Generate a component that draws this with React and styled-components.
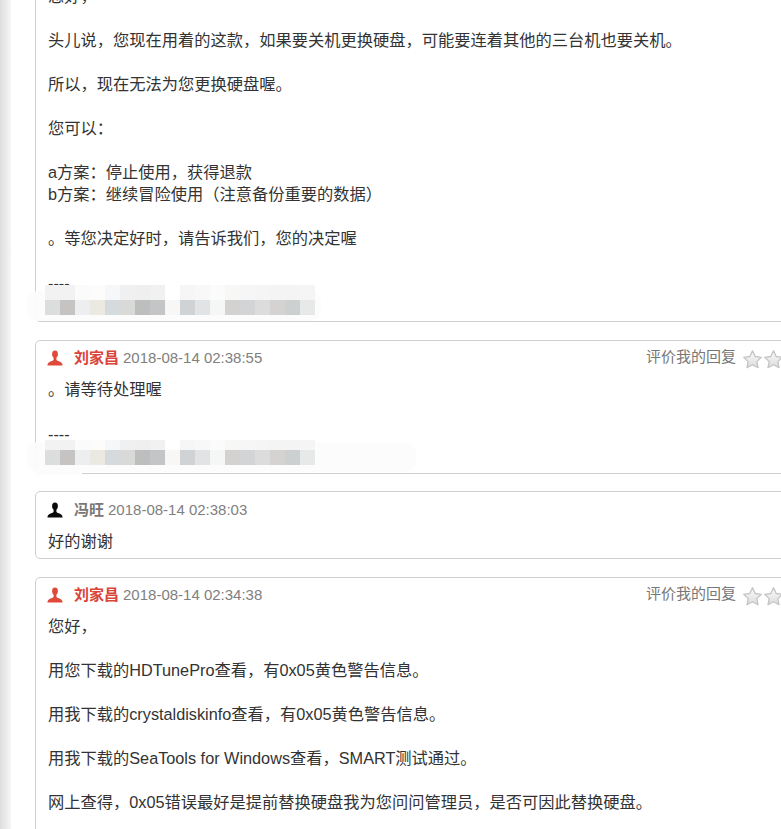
import React from "react";
import styled, { createGlobalStyle } from "styled-components";

const Global = createGlobalStyle`
  html, body { margin: 0; padding: 0; background: #fff; }
  body { font-family: "Liberation Sans", "Noto Sans CJK SC", sans-serif; color: #333; }
`;

const Page = styled.div`
  width: 781px;
  height: 829px;
  overflow: hidden;
  display: flex;
  background: #fff;
`;

const Edge = styled.div`
  flex: 0 0 11px;
  background: linear-gradient(to right, #dedede, #f6f6f6);
`;

const Thread = styled.div`
  flex: 0 0 825px;
  margin-left: 24px;
  margin-top: -15.4px;
  display: flex;
  flex-direction: column;
  gap: 17.6px;
`;

const Card = styled.article`
  border: 1px solid #cfcfcf;
  border-radius: 5px;
  padding: 6.6px 12px 5.4px;
  ${(p) => (p.$clipped ? "padding-top: 0;" : "")}
`;

const Header = styled.header`
  display: flex;
  align-items: center;
  height: 22px;
  margin: 0 0 10px -1px;
  font-size: 15px;
  line-height: 22px;
`;

const Avatar = styled.svg`
  width: 16px;
  height: 16px;
  margin-right: 11px;
  flex: none;
  color: ${(p) => p.$color};
`;

const Name = styled.strong`
  color: ${(p) => p.$color};
  font-weight: 700;
  margin-right: 4px;
`;

const Time = styled.span`
  color: #808080;
`;

const Rating = styled.div`
  margin-left: auto;
  display: flex;
  align-items: center;
  color: #777;
  margin-top: -2px;
`;

const RatingLabel = styled.span`
  margin-right: 6px;
`;

const StarIcon = styled.svg`
  width: 21px;
  height: 21px;
  flex: none;
  margin-top: 5px;
`;

const Body = styled.div`
  font-size: 16.25px;
  line-height: 22px;
  white-space: pre-line;
  margin: -1px 0 1px;
`;

const Dashes = styled.div`
  font-size: 16.25px;
  line-height: 22px;
`;

const Signature = styled.div`
  position: relative;
  height: 22px;
`;

const Haze = styled.div`
  position: absolute;
  left: -22px;
  top: ${(p) => p.$top}px;
  width: ${(p) => p.$width}px;
  height: 30px;
  background: rgba(252, 252, 252, 0.92);
  border-radius: 12px;
`;

const Smudge = styled.div`
  position: absolute;
  left: -13px;
  top: 25px;
  width: 47px;
  height: 5px;
  background: #fcfcfc;
`;

const Mosaic = styled.div`
  position: absolute;
  left: -3px;
  top: ${(p) => p.$top}px;
  display: grid;
  grid-template-columns: repeat(18, 15px);
  grid-template-rows: ${(p) => p.$rows};
`;

const Cell = styled.span`
  background: ${(p) => p.$c};
`;

const topRow = ["#f2f2f2","#f2f2f2","#fbfbfb","#fdfcfa","#f6f7f8","#f0f0f0","#efefef","#f1f1f1","#fff","#f6f6f6","#f8f8f8","#fbfbfb","#f7f7f6","#f6f6f6","#f5f5f5","#f4f4f4","#f4f4f4","#f5f5f5"];
const bottomRow = ["#dcdddd","#c5c4c2","#eceeef","#ece9e3","#d5dbdd","#d9d9d7","#bdbfbf","#c3c5c6","#f8f7f5","#d0d3d6","#e2e3e4","#f5f6f6","#d3d2d1","#d2d4d5","#dcdcdc","#d5d3d1","#ccd0d1","#e7e8e8"];

function Person({ color }) {
  return (
    <Avatar $color={color} viewBox="0 0 16 16" aria-hidden="true">
      <path
        fill="currentColor"
        d="M8 0.5C6 0.5 5.1 2 5.1 4c0 1.6.6 3 1.5 3.8v1.6c0 .7-.9 1.2-2.6 1.9C2 12.1.6 13 .4 15.5h15.2c-.2-2.5-1.6-3.4-3.6-4.2-1.7-.7-2.6-1.2-2.6-1.9V7.8c.9-.8 1.5-2.2 1.5-3.8 0-2-.9-3.5-2.9-3.5z"
      />
    </Avatar>
  );
}

function Star({ id }) {
  return (
    <StarIcon viewBox="0 0 21 21" aria-hidden="true">
      <defs>
        <linearGradient id={id} x1="0" y1="0" x2="0" y2="1">
          <stop offset="0" stopColor="#fbfbfb" />
          <stop offset="1" stopColor="#dcdcdc" />
        </linearGradient>
      </defs>
      <path
        d="M10.5 1.8l2.7 5.7 6.1.8-4.5 4.3 1.2 6.1-5.5-3-5.5 3 1.2-6.1L1.7 8.3l6.1-.8z"
        fill={`url(#${id})`}
        stroke="#c4c4c4"
        strokeWidth="1.3"
        strokeLinejoin="round"
      />
    </StarIcon>
  );
}

function Blurred({ hazeTop, hazeWidth, top, rows, smudge }) {
  return (
    <Signature>
      <Haze $top={hazeTop} $width={hazeWidth} />
      {smudge && <Smudge />}
      <Mosaic $top={top} $rows={rows}>
        {topRow.map((c, i) => <Cell key={`t${i}`} $c={c} />)}
        {bottomRow.map((c, i) => <Cell key={`b${i}`} $c={c} />)}
      </Mosaic>
    </Signature>
  );
}

function CardHeader({ name, time, nameColor, iconColor, rate, id }) {
  return (
    <Header>
      <Person color={iconColor} />
      <Name $color={nameColor}>{name}</Name>
      <Time>{time}</Time>
      {rate && (
        <Rating>
          <RatingLabel>评价我的回复</RatingLabel>
          {[0, 1, 2, 3, 4].map((i) => <Star key={i} id={`${id}-${i}`} />)}
        </Rating>
      )}
    </Header>
  );
}

export default function App() {
  return (
    <>
      <Global />
      <Page>
        <Edge />
        <Thread>
          <Card $clipped>
            <Body>
              {"您好，\n\n头儿说，您现在用着的这款，如果要关机更换硬盘，可能要连着其他的三台机也要关机。\n\n所以，现在无法为您更换硬盘喔。\n\n您可以：\n\na方案：停止使用，获得退款\nb方案：继续冒险使用（注意备份重要的数据）\n\n。等您决定好时，请告诉我们，您的决定喔\n"}
              &nbsp;
            </Body>
            <Dashes>----</Dashes>
            <Blurred hazeTop={-3} hazeWidth={295} top={-8.6} rows="15px 15px" />
          </Card>
          <Card>
            <CardHeader name="刘家昌" time="2018-08-14 02:38:55" nameColor="#d9453a" iconColor="#e0483a" rate id="s1" />
            <Body>{"。请等待处理喔\n"}&nbsp;</Body>
            <Dashes>----</Dashes>
            <Blurred hazeTop={-3} hazeWidth={390} top={-5.2} rows="10px 15px" smudge />
          </Card>
          <Card>
            <CardHeader name="冯旺" time="2018-08-14 02:38:03" nameColor="#777" iconColor="#0a0a0a" />
            <Body>好的谢谢</Body>
          </Card>
          <Card>
            <CardHeader name="刘家昌" time="2018-08-14 02:34:38" nameColor="#d9453a" iconColor="#e0483a" rate id="s2" />
            <Body>
              {"您好，\n\n用您下载的HDTunePro查看，有0x05黄色警告信息。\n\n用我下载的crystaldiskinfo查看，有0x05黄色警告信息。\n\n用我下载的SeaTools for Windows查看，SMART测试通过。\n\n网上查得，0x05错误最好是提前替换硬盘我为您问问管理员，是否可因此替换硬盘。\n\n\n"}
              &nbsp;
            </Body>
          </Card>
        </Thread>
      </Page>
    </>
  );
}
